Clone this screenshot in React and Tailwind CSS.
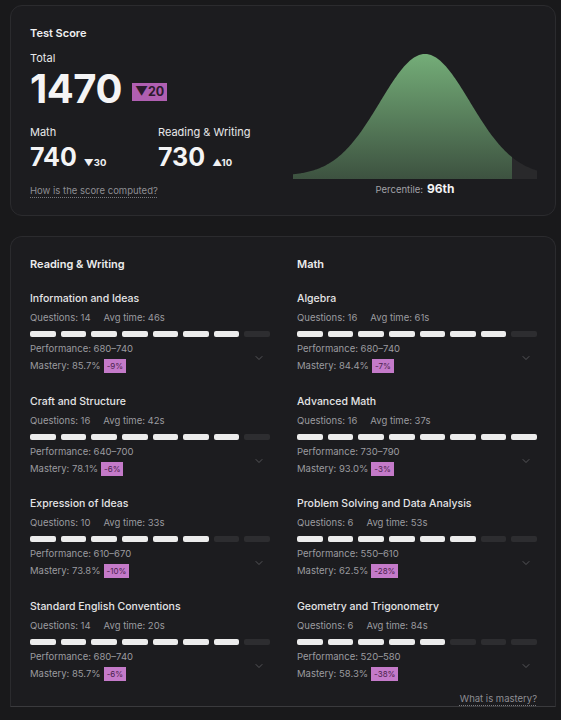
import React from "react";
import { ChevronDown } from "lucide-react";

const rw = [
  { title: "Information and Ideas", q: 14, t: "46s", filled: 7, perf: "680–740", mastery: "85.7%", delta: "-9%" },
  { title: "Craft and Structure", q: 16, t: "42s", filled: 7, perf: "640–700", mastery: "78.1%", delta: "-6%" },
  { title: "Expression of Ideas", q: 10, t: "33s", filled: 6, perf: "610–670", mastery: "73.8%", delta: "-10%" },
  { title: "Standard English Conventions", q: 14, t: "20s", filled: 7, perf: "680–740", mastery: "85.7%", delta: "-6%" },
];

const math = [
  { title: "Algebra", q: 16, t: "61s", filled: 7, perf: "680–740", mastery: "84.4%", delta: "-7%" },
  { title: "Advanced Math", q: 16, t: "37s", filled: 8, perf: "730–790", mastery: "93.0%", delta: "-3%" },
  { title: "Problem Solving and Data Analysis", q: 6, t: "53s", filled: 6, perf: "550–610", mastery: "62.5%", delta: "-28%" },
  { title: "Geometry and Trigonometry", q: 6, t: "84s", filled: 5, perf: "520–580", mastery: "58.3%", delta: "-38%" },
];

// Bell curve of the score distribution, shaded up to the student's percentile
function BellCurve() {
  const W = 244;
  const H = 125;
  const mu = 132;
  const sigma = 45;
  const cut = 219;
  const y = (x) => H - (3 + 122 * Math.exp(-((x - mu) ** 2) / (2 * sigma * sigma)));
  const pts = (from, to) => {
    const out = [];
    for (let x = from; x <= to; x += 1) out.push(`${x},${y(x).toFixed(2)}`);
    return out;
  };
  const green = `M0,${H} L${pts(0, cut).join(" L")} L${cut},${H} Z`;
  const grey = `M${cut},${H} L${pts(cut, W).join(" L")} L${W},${H} Z`;
  return (
    <svg width={W} height={H} viewBox={`0 0 ${W} ${H}`} className="block">
      <defs>
        <linearGradient id="curveFill" x1="0" y1="0" x2="0" y2="1">
          <stop offset="0%" stopColor="#74ad78" />
          <stop offset="100%" stopColor="#3d5240" />
        </linearGradient>
      </defs>
      <path d={green} fill="url(#curveFill)" />
      <path d={grey} fill="#29292b" />
    </svg>
  );
}

function Segments({ filled }) {
  return (
    <div className="flex gap-[5px] mt-[5px]">
      {Array.from({ length: 8 }).map((_, i) => (
        <div
          key={i}
          className={i < filled ? "flex-1 h-[6px] rounded-[2px] bg-[#ececec]" : "flex-1 h-[6px] rounded-[2px] bg-[#2d2d30]"}
        />
      ))}
    </div>
  );
}

function Skill({ s }) {
  return (
    <div>
      <div className="text-[10.5px] leading-4 font-medium text-[#e4e4e6]">{s.title}</div>
      <div className="flex gap-[13px] mt-[3px] text-[9.5px] leading-4 text-[#9b9b9f]">
        <span>Questions: {s.q}</span>
        <span>Avg time: {s.t}</span>
      </div>
      <Segments filled={s.filled} />
      <div className="flex items-center justify-between">
        <div>
          <div className="text-[9.5px] leading-[14px] mt-[5px] text-[#9b9b9f]">Performance: {s.perf}</div>
          <div className="flex items-center gap-[3px] mt-[3px] text-[9.5px] leading-[14px] text-[#9b9b9f]">
            <span>Mastery: {s.mastery}</span>
            <span className="bg-[#c47ac9] text-[#4a1f4c] text-[8px] leading-[14px] px-[3px]">{s.delta}</span>
          </div>
        </div>
        <ChevronDown size={12} strokeWidth={1.5} className="text-[#67676b] mr-[5px] mt-[6px]" />
      </div>
    </div>
  );
}

function Column({ title, items }) {
  return (
    <div>
      <div className="text-[11px] leading-4 font-semibold text-[#ececee] mb-[19px]">{title}</div>
      <div className="flex flex-col gap-[20.5px]">
        {items.map((s) => (
          <Skill key={s.title} s={s} />
        ))}
      </div>
    </div>
  );
}

export default function App() {
  return (
    <div className="min-h-[720px] bg-[#19191b] pt-[5px] px-[10px] pr-[5px] font-[family-name:Inter,sans-serif] text-[#ececee]">
      <div className="rounded-[12px] border border-[#2b2b2e] bg-[#1c1c1f] pl-[19px] pr-[18px] pt-[19px] pb-[16px] flex">
        <div className="w-[263px]">
          <div className="text-[11px] leading-4 font-semibold text-[#f0f0f2]">Test Score</div>
          <div className="text-[11px] leading-4 mt-[9px] text-[#e8e8ea]">Total</div>
          <div className="flex items-end gap-[10px] mt-[3px]">
            <span className="text-[40px] leading-[40px] font-bold text-[#f4f4f5] tracking-[-0.5px]">1470</span>
            <span className="bg-[#b05fb1] text-[#2b1a2c] text-[12.5px] font-bold leading-[18px] px-[3px] mb-[8px]">▼20</span>
          </div>
          <div className="flex mt-[15px]">
            <div className="w-[128px]">
              <div className="text-[11px] leading-4 text-[#e8e8ea]">Math</div>
              <div className="flex items-end gap-[7px] mt-[4px]">
                <span className="text-[25px] leading-[26px] font-bold text-[#f4f4f5]">740</span>
                <span className="text-[9.5px] font-bold leading-[14px] text-[#f0f0f2]">▼30</span>
              </div>
            </div>
            <div>
              <div className="text-[11px] leading-4 text-[#e8e8ea]">Reading &amp; Writing</div>
              <div className="flex items-end gap-[7px] mt-[4px]">
                <span className="text-[25px] leading-[26px] font-bold text-[#f4f4f5]">730</span>
                <span className="text-[9.5px] font-bold leading-[14px] text-[#f0f0f2]">▲10</span>
              </div>
            </div>
          </div>
          <div className="mt-[13px] text-[9.5px] leading-4 text-[#8e8e93] underline decoration-dotted underline-offset-[3px] decoration-[#77777c]">
            How is the score computed?
          </div>
        </div>
        <div className="flex-1 flex flex-col items-center pt-[29px]">
          <BellCurve />
          <div className="flex items-baseline gap-[4px] mt-[1px]">
            <span className="text-[9.5px] text-[#a1a1a6]">Percentile:</span>
            <span className="text-[12px] font-bold text-[#f4f4f5]">96th</span>
          </div>
        </div>
      </div>

      <div className="mt-[20px] rounded-t-[12px] border border-[#2b2b2e] border-b-dashed border-b-[#3a3a3d] bg-[#1c1c1f] pl-[19px] pr-[18px] pt-[19px] pb-0">
        <div className="grid grid-cols-2 gap-[27px]">
          <Column title="Reading & Writing" items={rw} />
          <Column title="Math" items={math} />
        </div>
        <div className="flex justify-end mt-[11px]">
          <span className="text-[9.5px] leading-[14px] text-[#8e8e93] underline decoration-dotted underline-offset-[3px] decoration-[#77777c]">
            What is mastery?
          </span>
        </div>
      </div>
    </div>
  );
}
